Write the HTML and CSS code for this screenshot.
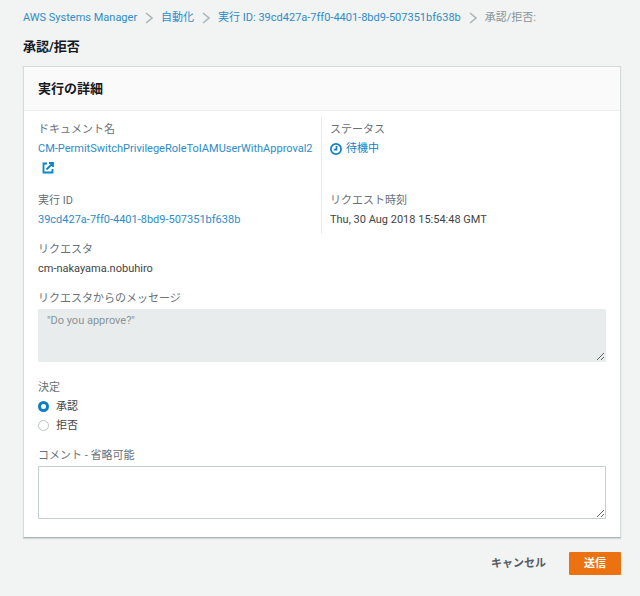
FILE: index.html
```html
<!DOCTYPE html>
<html lang="ja">
<head>
    <meta charset="utf-8">
    <title>承認/拒否 - AWS Systems Manager</title>
    <link rel="stylesheet" href="styles.css">
</head>
<body>
    <nav class="breadcrumb">
        <a href="#">AWS Systems Manager</a>
        <svg class="chevron" viewBox="0 0 8 12"><path d="M1 1l6 5-6 5"/></svg>
        <a href="#">自動化</a>
        <svg class="chevron" viewBox="0 0 8 12"><path d="M1 1l6 5-6 5"/></svg>
        <a href="#">実行 ID: 39cd427a-7ff0-4401-8bd9-507351bf638b</a>
        <svg class="chevron" viewBox="0 0 8 12"><path d="M1 1l6 5-6 5"/></svg>
        <span class="current">承認/拒否:</span>
    </nav>
    <h1>承認/拒否</h1>
    <form>
        <div class="panel">
            <h2>実行の詳細</h2>
            <div class="panel-body">
                <div class="details">
                    <div class="item">
                        <div class="label">ドキュメント名</div>
                        <a href="#">CM-PermitSwitchPrivilegeRoleToIAMUserWithApproval2</a>
                        <a href="#" aria-label="CM-PermitSwitchPrivilegeRoleToIAMUserWithApproval2" class="external">
                            <svg viewBox="0 0 12 12"><path d="M5 1.5H1.5v9h9V7M7 1h4v4M11 1L4.5 7.5"/></svg>
                        </a>
                    </div>
                    <div class="item">
                        <div class="label">ステータス</div>
                        <div class="status">
                            <svg class="clock" viewBox="0 0 12 12"><circle cx="6" cy="6" r="5.1"/><path d="M6.5 3v3.6H3.8"/></svg>
                            待機中
                        </div>
                    </div>
                    <div class="item">
                        <div class="label">実行 ID</div>
                        <a href="#">39cd427a-7ff0-4401-8bd9-507351bf638b</a>
                    </div>
                    <div class="item">
                        <div class="label">リクエスト時刻</div>
                        <div>Thu, 30 Aug 2018 15:54:48 GMT</div>
                    </div>
                </div>
                <div class="field">
                    <div class="label">リクエスタ</div>
                    <div>cm-nakayama.nobuhiro</div>
                </div>
                <div class="field">
                    <label class="label" for="message">リクエスタからのメッセージ</label>
                    <textarea id="message" disabled>"Do you approve?"</textarea>
                </div>
                <fieldset class="field">
                    <legend class="label">決定</legend>
                    <label class="option"><input type="radio" name="decision" value="approve" checked>承認</label>
                    <label class="option"><input type="radio" name="decision" value="reject">拒否</label>
                </fieldset>
                <div class="field">
                    <label class="label" for="comment">コメント - 省略可能</label>
                    <textarea id="comment"></textarea>
                </div>
            </div>
        </div>
        <div class="actions">
            <button type="button" class="cancel">キャンセル</button>
            <button type="submit" class="submit">送信</button>
        </div>
    </form>
</body>
</html>
```
FILE: styles.css
```css
* {
    box-sizing: border-box;
}
body {
    margin: 0;
    padding: 8px 19px 20px 23px;
    background-color: #f2f3f3;
    color: #444;
    font-family: Roboto, "Noto Sans CJK JP", sans-serif;
    font-size: 11px;
    line-height: 19px;
}
a {
    color: #2e8bc9;
    text-decoration: none;
}
a:hover {
    text-decoration: underline;
}
svg {
    fill: none;
    stroke: currentColor;
}
.breadcrumb {
    display: flex;
    align-items: center;
    gap: 8px;
    white-space: nowrap;
}
.chevron {
    width: 8px;
    height: 12px;
    color: #aab7b8;
    stroke-width: 1.6;
}
.current {
    color: #879596;
}
h1, h2 {
    margin: 0;
    color: #16191f;
    font-size: 13px;
    font-weight: bold;
}
h1 {
    padding: 10px 0;
}
.panel {
    background-color: #fff;
    border: 1px solid #d5dbdb;
    border-bottom-color: #aab7b8;
    box-shadow: 0 1px 1px #d5dbdb;
}
h2 {
    padding: 12px 14px;
    background-color: #fafafa;
    border-bottom: 1px solid #eaeded;
}
.panel-body {
    padding: 4px 14px 18px;
}
.details {
    display: grid;
    grid-template-columns: 1fr 1fr;
}
.item {
    padding: 5px 8px;
}
.item:nth-child(odd) {
    padding-left: 0;
    border-right: 1px solid #eaeded;
}
.item:nth-child(-n+2) {
    padding-bottom: 9px;
}
.label {
    display: block;
    padding: 0;
    color: #687078;
}
.external {
    display: flex;
    align-items: center;
    height: 19px;
    padding-left: 4px;
    color: #0a84c6;
}
.external svg {
    width: 12px;
    height: 12px;
    stroke-width: 1.8;
}
.status {
    display: flex;
    align-items: center;
    gap: 4px;
    color: #0a84c6;
}
.clock {
    width: 12px;
    height: 12px;
    stroke-width: 1.7;
}
.field {
    margin: 0 0 11px;
    padding: 0;
    border: 0;
}
.details + .field {
    margin-top: 6px;
}
textarea {
    display: block;
    width: 100%;
    height: 53px;
    margin: 1px 0 16px;
    padding: 1px 8px;
    border: 1px solid #c4cecf;
    border-radius: 1px;
    background-color: #fff;
    color: #16191f;
    font: inherit;
}
textarea:disabled {
    border-color: #e9ecec;
    background-color: #e9ecec;
    color: #879596;
}
#comment {
    margin-bottom: 0;
}
.field:last-child {
    margin-bottom: 0;
}
.option {
    display: flex;
    align-items: center;
    gap: 7px;
}
input[type="radio"] {
    appearance: none;
    width: 11px;
    height: 11px;
    margin: 0;
    border: 1px solid #b9c4c5;
    border-radius: 50%;
    background-color: #fff;
}
input[type="radio"]:checked {
    border: 3px solid #0a7fc2;
}
.actions {
    display: flex;
    justify-content: flex-end;
    margin-top: 14px;
}
button {
    height: 23px;
    padding: 0 14px;
    border: 1px solid transparent;
    border-radius: 1px;
    background-color: transparent;
    color: #545b64;
    font: inherit;
    font-weight: bold;
    cursor: pointer;
}
.cancel {
    margin-right: 8px;
}
.submit {
    background-color: #ec7211;
    color: #fff;
}
.submit:hover {
    background-color: #eb5f07;
}
```
